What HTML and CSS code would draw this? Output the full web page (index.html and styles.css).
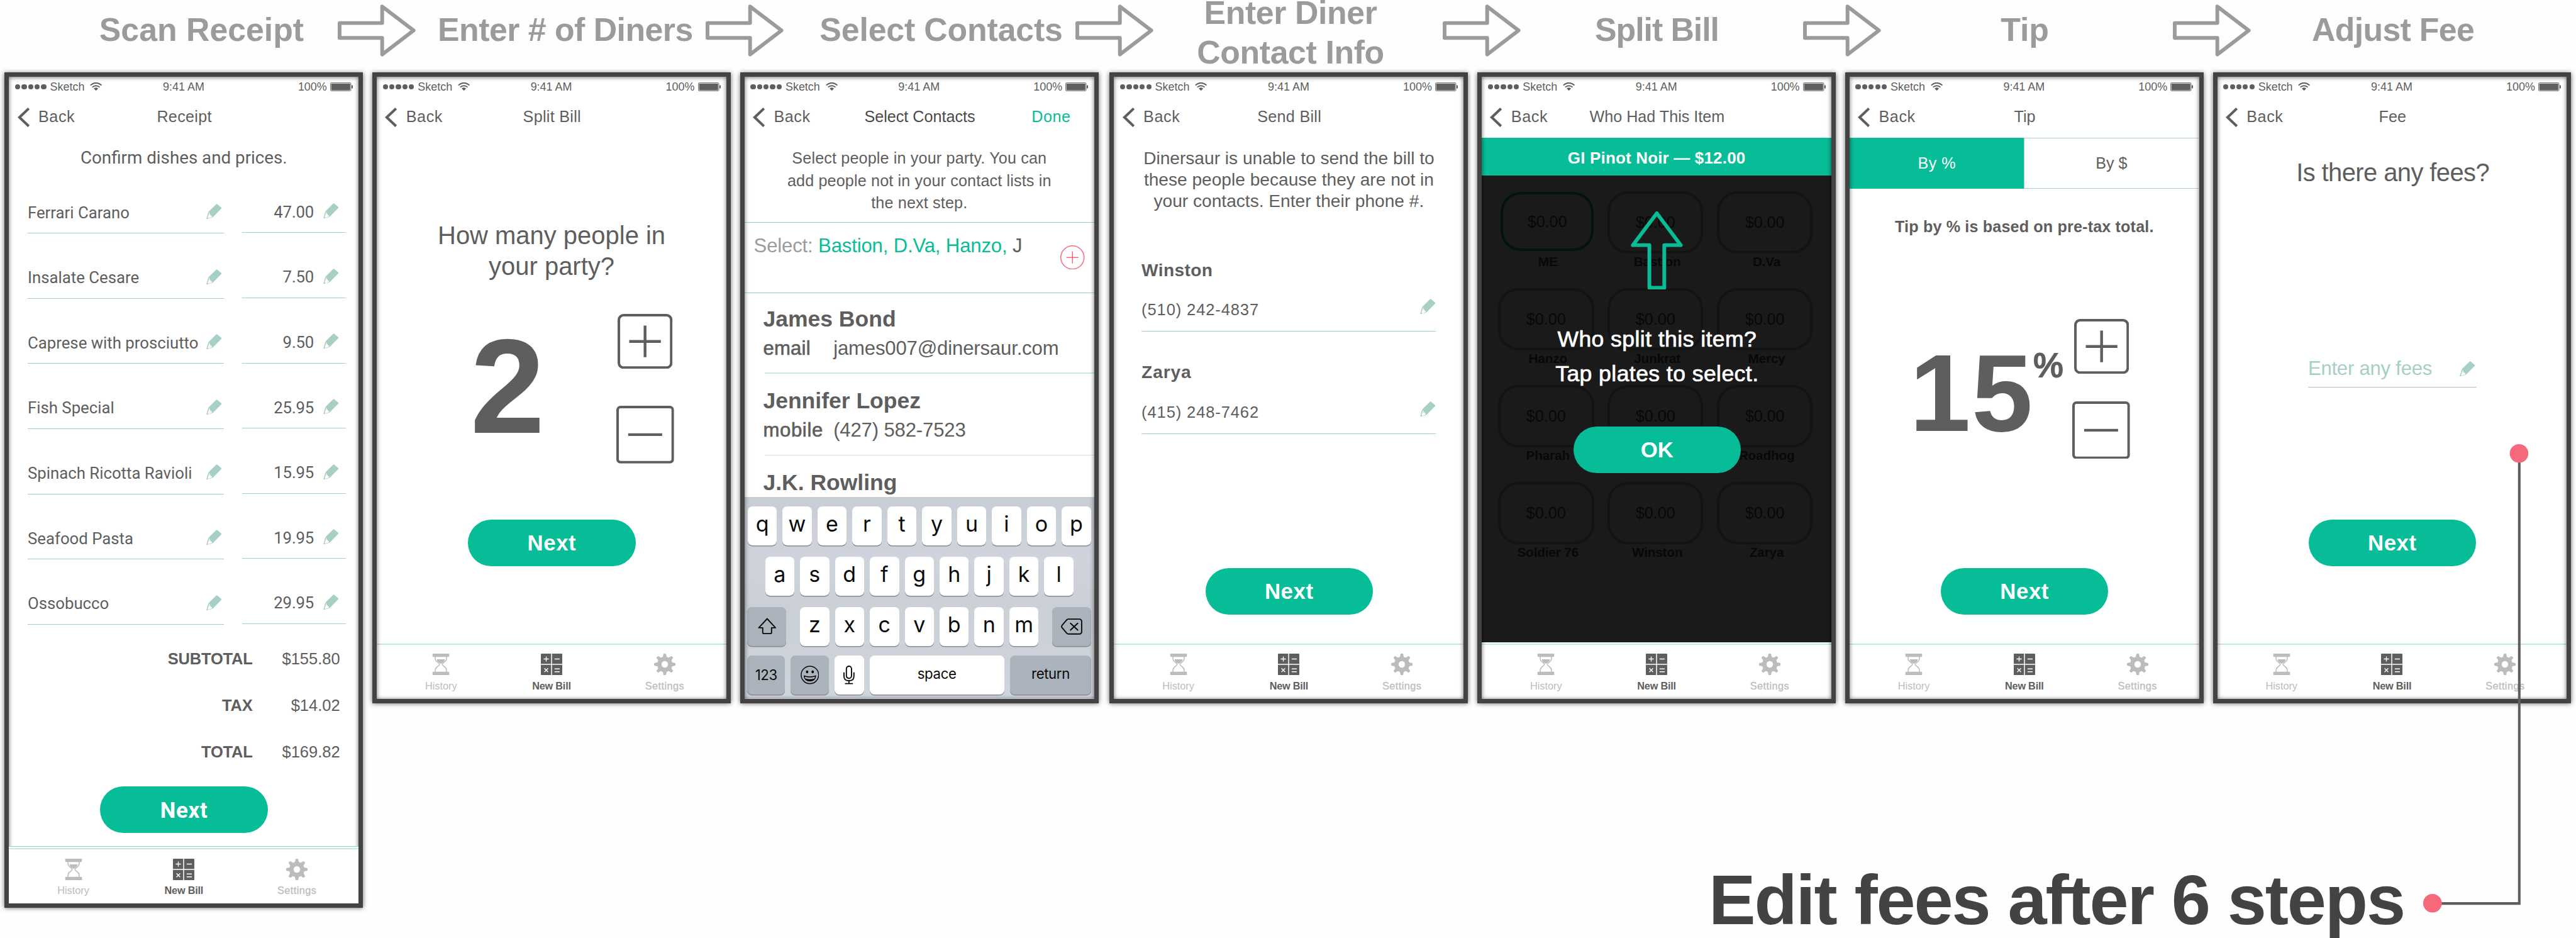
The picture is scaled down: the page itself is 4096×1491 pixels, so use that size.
FILE: index.html
```html
<!DOCTYPE html>
<html lang="en">
<head>
<meta charset="utf-8">
<title>Dinersaur – bill splitting flow</title>
<link rel="stylesheet" href="styles.css">
</head>
<body>
<svg class="sprite" aria-hidden="true">
  <symbol id="step-arrow" viewBox="0 0 168 112">
    <path d="M4 40H95.500V4.500L163 56 95.500 107.500V72H4Z" fill="none" stroke="currentColor" stroke-width="8" stroke-linejoin="round"/>
  </symbol>
  <symbol id="wifi" viewBox="0 0 26 18">
    <path d="M1 6.200Q13-4.200 25 6.200M5 10.300Q13 3.700 21 10.300" fill="none" stroke="currentColor" stroke-width="2.500"/>
    <path d="M8.300 13.100Q13 9.300 17.700 13.100L13 17.800Z" fill="currentColor"/>
  </symbol>
  <symbol id="battery" viewBox="0 0 49 19">
    <rect x=".6" y=".6" width="44" height="17.800" rx="2.500" fill="none" stroke="currentColor" stroke-width="1.200"/>
    <rect x="2.200" y="2.200" width="40.800" height="14.600" rx="1" fill="currentColor"/>
    <path d="M46 6h1.500q1.500 0 1.500 1.500v4q0 1.500-1.500 1.500H46Z" fill="currentColor"/>
  </symbol>
  <symbol id="chevron" viewBox="0 0 26 42">
    <path d="M24 2 4 21 24 40" fill="none" stroke="currentColor" stroke-width="5.500"/>
  </symbol>
  <symbol id="pencil" viewBox="0 0 33 33">
    <path fill-rule="evenodd" fill="currentColor" d="M21.500.8Q22.500-.2 23.500.6L32.300 8Q33.300 9 32.400 10L14.500 28.500 12 29.700 0 33 4.200 19 6 15.800ZM6.800 18.500 3 29.600 4.500 31 11.800 28.600 12.200 25.400 9.300 26.200 10 23 6.800 23.600 7.800 19.500Z"/>
  </symbol>
  <symbol id="hourglass" viewBox="0 0 46 46">
    <path fill="currentColor" d="M5 0H41V5Q41 7 39 7H7Q5 7 5 5ZM5 46H41V41Q41 39 39 39H7Q5 39 5 41ZM14.500 12H31.500C31.500 17 26.500 19.500 23 21.500 19.500 19.500 14.500 17 14.500 12Z"/>
    <path d="M11 6V11C11 18 20 19 20 23S11 28 11 35V40M35 6V11C35 18 26 19 26 23S35 28 35 35V40" fill="none" stroke="currentColor" stroke-width="2"/>
  </symbol>
  <symbol id="calculator" viewBox="0 0 46 46">
    <path fill="currentColor" d="M1.500 0H22V22H0V1.500Q0 0 1.500 0ZM24 0H44.500Q46 0 46 1.500V22H24ZM0 24H22V46H1.500Q0 46 0 44.500ZM24 24H46V44.500Q46 46 44.500 46H24Z"/>
    <path d="M6 11.500H17M11.500 6V17M29.500 11.500H40.500M7.500 31.500 15.500 39.500M15.500 31.500 7.500 39.500M29.500 32.800H40.500M29.500 38.800H40.500" stroke="#fff" stroke-width="1.800"/>
  </symbol>
  <symbol id="gear" viewBox="0 0 46 46">
    <g fill="currentColor">
      <path fill-rule="evenodd" d="M23 6.500a16.500 16.500 0 1 0 0 33 16.500 16.500 0 0 0 0-33ZM23 16a7 7 0 1 1 0 14 7 7 0 0 1 0-14Z"/>
      <path id="tooth" d="M18.500 9 20 1.500Q20.300 0 21.500 0H24.500Q25.700 0 26 1.500L27.500 9Z"/>
      <use href="#tooth" transform="rotate(45 23 23)"/><use href="#tooth" transform="rotate(90 23 23)"/>
      <use href="#tooth" transform="rotate(135 23 23)"/><use href="#tooth" transform="rotate(180 23 23)"/>
      <use href="#tooth" transform="rotate(225 23 23)"/><use href="#tooth" transform="rotate(270 23 23)"/>
      <use href="#tooth" transform="rotate(315 23 23)"/>
    </g>
  </symbol>
  <symbol id="plus-box" viewBox="0 0 118 118">
    <rect x="2.750" y="2.750" width="112.500" height="112.500" rx="10" fill="none" stroke="currentColor" stroke-width="5.500"/>
    <path d="M25 59H93M59 25V93" stroke="currentColor" stroke-width="6"/>
  </symbol>
  <symbol id="minus-box" viewBox="0 0 124 124">
    <rect x="2.750" y="2.750" width="118.500" height="118.500" rx="6" fill="none" stroke="currentColor" stroke-width="5.500"/>
    <path d="M25.500 62H98.500" stroke="currentColor" stroke-width="6"/>
  </symbol>
</svg>

<main class="board">
  <header class="steps">
    <h2 class="step step-1">Scan Receipt</h2>
    <svg class="step-arrow"><use href="#step-arrow"/></svg>
    <h2 class="step step-2">Enter # of Diners</h2>
    <svg class="step-arrow"><use href="#step-arrow"/></svg>
    <h2 class="step step-3">Select Contacts</h2>
    <svg class="step-arrow"><use href="#step-arrow"/></svg>
    <h2 class="step step-4">Enter Diner<br>Contact Info</h2>
    <svg class="step-arrow"><use href="#step-arrow"/></svg>
    <h2 class="step step-5">Split Bill</h2>
    <svg class="step-arrow"><use href="#step-arrow"/></svg>
    <h2 class="step step-6">Tip</h2>
    <svg class="step-arrow"><use href="#step-arrow"/></svg>
    <h2 class="step step-7">Adjust Fee</h2>
  </header>

  <div class="stage">
    <div class="phones">

      <section class="phone phone-tall">
        <div class="status"><span class="signal"><i></i><i></i><i></i><i></i><i></i></span><span class="carrier">Sketch</span><svg class="wifi"><use href="#wifi"/></svg><span class="clock">9:41 AM</span><span class="charge">100%</span><svg class="battery"><use href="#battery"/></svg></div>
        <nav class="nav"><a class="back"><svg class="chevron"><use href="#chevron"/></svg>Back</a><span class="nav-title nav-receipt">Receipt</span></nav>
        <p class="receipt-intro">Confirm dishes and prices.</p>
        <ul class="dishes">
          <li class="dish"><span class="cell cell-name">Ferrari Carano<svg class="pencil"><use href="#pencil"/></svg></span><span class="cell cell-price">47.00<svg class="pencil"><use href="#pencil"/></svg></span></li>
          <li class="dish"><span class="cell cell-name">Insalate Cesare<svg class="pencil"><use href="#pencil"/></svg></span><span class="cell cell-price">7.50<svg class="pencil"><use href="#pencil"/></svg></span></li>
          <li class="dish"><span class="cell cell-name">Caprese with prosciutto<svg class="pencil"><use href="#pencil"/></svg></span><span class="cell cell-price">9.50<svg class="pencil"><use href="#pencil"/></svg></span></li>
          <li class="dish"><span class="cell cell-name">Fish Special<svg class="pencil"><use href="#pencil"/></svg></span><span class="cell cell-price">25.95<svg class="pencil"><use href="#pencil"/></svg></span></li>
          <li class="dish"><span class="cell cell-name">Spinach Ricotta Ravioli<svg class="pencil"><use href="#pencil"/></svg></span><span class="cell cell-price">15.95<svg class="pencil"><use href="#pencil"/></svg></span></li>
          <li class="dish"><span class="cell cell-name">Seafood Pasta<svg class="pencil"><use href="#pencil"/></svg></span><span class="cell cell-price">19.95<svg class="pencil"><use href="#pencil"/></svg></span></li>
          <li class="dish"><span class="cell cell-name">Ossobucco<svg class="pencil"><use href="#pencil"/></svg></span><span class="cell cell-price">29.95<svg class="pencil"><use href="#pencil"/></svg></span></li>
        </ul>
        <dl class="totals">
          <div class="total"><dt>SUBTOTAL</dt><dd>$155.80</dd></div>
          <div class="total"><dt>TAX</dt><dd>$14.02</dd></div>
          <div class="total"><dt>TOTAL</dt><dd>$169.82</dd></div>
        </dl>
        <button class="pill pill-receipt">Next</button>
        <div class="tab-rule"></div>
        <footer class="tabbar tabbar-raised"><div class="tab"><svg class="tab-icon"><use href="#hourglass"/></svg><span>History</span></div><div class="tab tab-active"><svg class="tab-icon"><use href="#calculator"/></svg><span>New Bill</span></div><div class="tab tab-settings"><svg class="tab-icon"><use href="#gear"/></svg><span>Settings</span></div></footer>
      </section>

      <section class="phone">
        <div class="status"><span class="signal"><i></i><i></i><i></i><i></i><i></i></span><span class="carrier">Sketch</span><svg class="wifi"><use href="#wifi"/></svg><span class="clock">9:41 AM</span><span class="charge">100%</span><svg class="battery"><use href="#battery"/></svg></div>
        <nav class="nav"><a class="back"><svg class="chevron"><use href="#chevron"/></svg>Back</a><span class="nav-title nav-receipt">Split Bill</span></nav>
        <p class="question question-party">How many people in<br>your party?</p>
        <div class="stepper stepper-party">
          <span class="count">2</span>
          <div class="stepper-buttons"><svg class="plus-box"><use href="#plus-box"/></svg><svg class="minus-box"><use href="#minus-box"/></svg></div>
        </div>
        <button class="pill pill-party">Next</button>
        <footer class="tabbar"><div class="tab"><svg class="tab-icon"><use href="#hourglass"/></svg><span>History</span></div><div class="tab tab-active"><svg class="tab-icon"><use href="#calculator"/></svg><span>New Bill</span></div><div class="tab tab-settings"><svg class="tab-icon"><use href="#gear"/></svg><span>Settings</span></div></footer>
      </section>

      <section class="phone">
        <div class="status"><span class="signal"><i></i><i></i><i></i><i></i><i></i></span><span class="carrier">Sketch</span><svg class="wifi"><use href="#wifi"/></svg><span class="clock">9:41 AM</span><span class="charge">100%</span><svg class="battery"><use href="#battery"/></svg></div>
        <nav class="nav"><a class="back"><svg class="chevron"><use href="#chevron"/></svg>Back</a><span class="nav-title nav-dark">Select Contacts</span><a class="done">Done</a></nav>
        <p class="contacts-intro">Select people in your party. You can<br>add people not in your contact lists in<br>the next step.</p>
        <div class="picker">
          <p class="picker-text"><span class="picker-label">Select:</span> <span class="picker-names">Bastion, D.Va, Hanzo,</span> J</p>
          <svg class="add" viewBox="0 0 52 52"><circle cx="26" cy="26" r="25"/><path d="M13 26H39M26 13V39"/></svg>
        </div>
        <ul class="contacts">
          <li class="contact"><strong>James Bond</strong><div class="detail"><span class="kind kind-email">email</span><span class="email">james007@dinersaur.com</span></div></li>
          <li class="contact"><strong>Jennifer Lopez</strong><div class="detail"><span class="kind kind-mobile">mobile</span><span>(427) 582-7523</span></div></li>
          <li class="contact"><strong>J.K. Rowling</strong></li>
        </ul>
        <div class="keyboard">
          <div class="keys"><kbd>q</kbd><kbd>w</kbd><kbd>e</kbd><kbd>r</kbd><kbd>t</kbd><kbd>y</kbd><kbd>u</kbd><kbd>i</kbd><kbd>o</kbd><kbd>p</kbd></div>
          <div class="keys"><kbd>a</kbd><kbd>s</kbd><kbd>d</kbd><kbd>f</kbd><kbd>g</kbd><kbd>h</kbd><kbd>j</kbd><kbd>k</kbd><kbd>l</kbd></div>
          <div class="keys keys-edge">
            <kbd class="key-dark key-side"><svg class="key-shift" viewBox="0 0 40 36"><path d="M20 2 38 21.500H29.500V31.500Q29.500 34 27 34H13Q10.500 34 10.500 31.500V21.500H2Z"/></svg></kbd>
            <div class="keys"><kbd>z</kbd><kbd>x</kbd><kbd>c</kbd><kbd>v</kbd><kbd>b</kbd><kbd>n</kbd><kbd>m</kbd></div>
            <kbd class="key-dark key-side"><svg class="key-delete" viewBox="0 0 46 35"><path d="M16 1.500H39Q44.500 1.500 44.500 7V28Q44.500 33.500 39 33.500H16Q14 33.500 12.500 32L2 19.500Q.8 17.500 2 15.500L12.500 3Q14 1.500 16 1.500ZM20.500 10.500 36 25M36 10.500 20.500 25"/></svg></kbd>
          </div>
          <div class="keys keys-last">
            <kbd class="key-dark key-word key-123">123</kbd>
            <kbd class="key-dark key-emoji"><svg class="emoji" viewBox="0 0 40 40"><circle cx="20" cy="20" r="18.800" fill="none" stroke="#0a0a0a" stroke-width="2"/><ellipse cx="14" cy="13.500" rx="2.600" ry="2.900"/><ellipse cx="26" cy="13.500" rx="2.600" ry="2.900"/><path d="M6.500 21Q20 25.500 33.500 21 32.500 34 20 34T6.500 21Z"/><path d="M9 23.800Q20 27 31 23.800 30.600 27 29.500 28 20 31 10.500 28 9.400 27 9 23.800Z" fill="#abb3bd"/></svg></kbd>
            <kbd><svg class="mic" viewBox="0 0 24 40"><rect x="6.500" y="1.300" width="11" height="26" rx="5.500"/><path d="M1.300 15.500V22.500Q1.300 32.500 12 32.500T22.700 22.500V15.500M12 32.500V38.500M4.500 38.700H19.500"/></svg></kbd>
            <kbd class="key-word key-space">space</kbd>
            <kbd class="key-dark key-word key-return">return</kbd>
          </div>
        </div>
      </section>

      <section class="phone phone-spaced">
        <div class="status"><span class="signal"><i></i><i></i><i></i><i></i><i></i></span><span class="carrier">Sketch</span><svg class="wifi"><use href="#wifi"/></svg><span class="clock">9:41 AM</span><span class="charge">100%</span><svg class="battery"><use href="#battery"/></svg></div>
        <nav class="nav"><a class="back"><svg class="chevron"><use href="#chevron"/></svg>Back</a><span class="nav-title nav-receipt">Send Bill</span></nav>
        <p class="unable">Dinersaur is unable to send the bill to<br>these people because they are not in<br>your contacts. Enter their phone #.</p>
        <div class="entries">
          <div class="entry"><strong class="name-winston">Winston</strong><div class="field">(510) 242-4837<svg class="pencil"><use href="#pencil"/></svg></div></div>
          <div class="entry"><strong class="name-zarya">Zarya</strong><div class="field">(415) 248-7462<svg class="pencil"><use href="#pencil"/></svg></div></div>
        </div>
        <button class="pill pill-send">Next</button>
        <footer class="tabbar"><div class="tab"><svg class="tab-icon"><use href="#hourglass"/></svg><span>History</span></div><div class="tab tab-active"><svg class="tab-icon"><use href="#calculator"/></svg><span>New Bill</span></div><div class="tab tab-settings"><svg class="tab-icon"><use href="#gear"/></svg><span>Settings</span></div></footer>
      </section>

      <section class="phone">
        <div class="status"><span class="signal"><i></i><i></i><i></i><i></i><i></i></span><span class="carrier">Sketch</span><svg class="wifi"><use href="#wifi"/></svg><span class="clock">9:41 AM</span><span class="charge">100%</span><svg class="battery"><use href="#battery"/></svg></div>
        <nav class="nav"><a class="back"><svg class="chevron"><use href="#chevron"/></svg>Back</a><span class="nav-title">Who Had This Item</span></nav>
        <div class="item-banner">GI Pinot Noir — $12.00</div>
        <div class="table">
          <div class="plates">
            <div class="plate"><span class="dish-ring dish-me">$0.00</span><b>ME</b></div>
            <div class="plate"><span class="dish-ring">$0.00</span><b>Bastion</b></div>
            <div class="plate"><span class="dish-ring">$0.00</span><b>D.Va</b></div>
            <div class="plate"><span class="dish-ring">$0.00</span><b>Hanzo</b></div>
            <div class="plate"><span class="dish-ring">$0.00</span><b>Junkrat</b></div>
            <div class="plate"><span class="dish-ring">$0.00</span><b>Mercy</b></div>
            <div class="plate"><span class="dish-ring">$0.00</span><b>Pharah</b></div>
            <div class="plate"><span class="dish-ring">$0.00</span></div>
            <div class="plate"><span class="dish-ring">$0.00</span><b>Roadhog</b></div>
            <div class="plate"><span class="dish-ring">$0.00</span><b>Soldier 76</b></div>
            <div class="plate"><span class="dish-ring">$0.00</span><b>Winston</b></div>
            <div class="plate"><span class="dish-ring">$0.00</span><b>Zarya</b></div>
          </div>
          <div class="hint">
            <svg class="hint-arrow" viewBox="0 0 112 168"><path d="M56 4 107.500 72.500H72V164H40V72.500H4.500Z"/></svg>
            <p>Who split this item?<br>Tap plates to select.</p>
            <button class="pill pill-ok">OK</button>
          </div>
        </div>
        <footer class="tabbar"><div class="tab"><svg class="tab-icon"><use href="#hourglass"/></svg><span>History</span></div><div class="tab tab-active"><svg class="tab-icon"><use href="#calculator"/></svg><span>New Bill</span></div><div class="tab tab-settings"><svg class="tab-icon"><use href="#gear"/></svg><span>Settings</span></div></footer>
      </section>

      <section class="phone">
        <div class="status"><span class="signal"><i></i><i></i><i></i><i></i><i></i></span><span class="carrier">Sketch</span><svg class="wifi"><use href="#wifi"/></svg><span class="clock">9:41 AM</span><span class="charge">100%</span><svg class="battery"><use href="#battery"/></svg></div>
        <nav class="nav"><a class="back"><svg class="chevron"><use href="#chevron"/></svg>Back</a><span class="nav-title">Tip</span></nav>
        <div class="segments"><span class="segment segment-on">By %</span><span class="segment">By $</span></div>
        <p class="tip-note">Tip by % is based on pre-tax total.</p>
        <div class="stepper stepper-tip">
          <span class="percent">15</span><span class="percent-sign">%</span>
          <div class="stepper-buttons"><svg class="plus-box"><use href="#plus-box"/></svg><svg class="minus-box"><use href="#minus-box"/></svg></div>
        </div>
        <button class="pill pill-tip">Next</button>
        <footer class="tabbar"><div class="tab"><svg class="tab-icon"><use href="#hourglass"/></svg><span>History</span></div><div class="tab tab-active"><svg class="tab-icon"><use href="#calculator"/></svg><span>New Bill</span></div><div class="tab tab-settings"><svg class="tab-icon"><use href="#gear"/></svg><span>Settings</span></div></footer>
      </section>

      <section class="phone">
        <div class="status"><span class="signal"><i></i><i></i><i></i><i></i><i></i></span><span class="carrier">Sketch</span><svg class="wifi"><use href="#wifi"/></svg><span class="clock">9:41 AM</span><span class="charge">100%</span><svg class="battery"><use href="#battery"/></svg></div>
        <nav class="nav"><a class="back"><svg class="chevron"><use href="#chevron"/></svg>Back</a><span class="nav-title">Fee</span></nav>
        <p class="question question-fee">Is there any fees?</p>
        <div class="fee-field">Enter any fees<svg class="pencil"><use href="#pencil"/></svg></div>
        <button class="pill pill-fee">Next</button>
        <footer class="tabbar"><div class="tab"><svg class="tab-icon"><use href="#hourglass"/></svg><span>History</span></div><div class="tab tab-active"><svg class="tab-icon"><use href="#calculator"/></svg><span>New Bill</span></div><div class="tab tab-settings"><svg class="tab-icon"><use href="#gear"/></svg><span>Settings</span></div></footer>
      </section>
    </div>

    <p class="caption">Edit fees after 6 steps</p>
  </div>

  <svg class="connector" viewBox="0 0 226 1006">
    <path d="M206.500 20V986.500H20" fill="none" stroke="#5e5e5e" stroke-width="5.500"/>
    <circle cx="206" cy="20" r="20" fill="#f6697c"/>
    <circle cx="20" cy="986" r="20" fill="#f6697c"/>
  </svg>
</main>
</body>
</html>
```
FILE: styles.css
```css
/* One hundredth of a rem is one artboard pixel. */
html {
  font-size: 74.0152px;
}

* {
  box-sizing: border-box;
  margin: 0;
  padding: 0;
}

body {
  background: #fefefe;
  color: #5e5e5e;
  font-family: "Liberation Sans", Arial, sans-serif;
  overflow: hidden;
}

ul { list-style: none; }
svg { display: block; flex: none; }
p, span, strong, b, dt, dd, button, kbd { white-space: nowrap; }

.sprite { position: absolute; width: 0; height: 0; }

.board {
  position: relative;
  width: 55.34rem;
  height: 20.14rem;
  overflow: hidden;
}

/* ---- step titles ---- */
.steps {
  display: flex;
  height: 1.56rem;
  color: #9b9b9b;
}

.step {
  flex: none;
  padding-top: .21rem;
  font-size: .7rem;
  font-weight: 700;
  line-height: .855rem;
  text-align: center;
  white-space: nowrap;
}

.step-1 { width: 7.26rem; padding-left: 1.4rem; }
.step-2 { width: 6.22rem; padding-left: .19rem; letter-spacing: -.007rem; }
.step-3 { width: 6.26rem; padding-left: .5rem; letter-spacing: -.002rem; }
.step-4 { width: 6.22rem; padding-right: .33rem; margin-top: -.36rem; letter-spacing: -.005rem; }
.step-5 { width: 6.06rem; padding-right: .23rem; letter-spacing: -.014rem; }
.step-6 { width: 6.26rem; padding-right: .1rem; }
.step-7 { width: 6.98rem; padding-right: .88rem; letter-spacing: -.009rem; }

.step-arrow { width: 1.68rem; height: 1.12rem; margin-top: .1rem; }

/* ---- phones ---- */
.stage { display: grid; height: 18.58rem; }
.stage > * { grid-area: 1 / 1; }

.phones {
  display: flex;
  align-items: flex-start;
  gap: .2rem;
  padding-left: .1rem;
}

.phone {
  position: relative;
  display: flex;
  flex: none;
  flex-direction: column;
  width: 7.7rem;
  height: 13.54rem;
  border: .1rem solid #434343;
  background: #fff;
  box-shadow: 0 .02rem .1rem rgba(0, 0, 0, .6);
}

.phone::after {
  content: "";
  position: absolute;
  inset: 0;
  box-shadow: inset 0 .01rem .1rem rgba(0, 0, 0, .6);
  pointer-events: none;
}

.phone-tall { height: 17.94rem; }
.phone-spaced { margin-left: .04rem; }

/* ---- status bar ---- */
.status {
  display: grid;
  grid-template-columns: .75rem .86rem 1.43rem 1.16rem 2.5rem .56rem;
  align-items: center;
  height: .41rem;
  padding-left: .13rem;
  font-size: .243rem;
  line-height: .3rem;
}

.signal { display: flex; gap: .03rem; }
.signal i { width: .11rem; height: .11rem; border-radius: 50%; background: currentColor; }
.wifi { width: .26rem; height: .18rem; }
.clock { text-align: center; }
.charge { text-align: right; }
.battery { width: .49rem; height: .19rem; margin-left: .07rem; }

/* ---- navigation bar ---- */
.nav {
  display: grid;
  grid-template-columns: 1fr auto 1fr;
  align-items: center;
  height: .89rem;
  padding: .01rem .5rem 0 .18rem;
  font-size: .34rem;
  line-height: .4rem;
}

.back { display: flex; align-items: center; gap: .19rem; letter-spacing: .008rem; }
.chevron { width: .26rem; height: .42rem; }
.nav-title { margin-left: .34rem; }
.nav-receipt { letter-spacing: .004rem; }
.nav-dark { color: #4a4a4a; }
.done { justify-self: end; color: #07bd98; letter-spacing: .008rem; margin-top: -.02rem; }

/* ---- shared controls ---- */
.pencil { width: .33rem; height: .33rem; color: #a6cfc6; }

.pill {
  flex: none;
  width: 3.6rem;
  height: 1rem;
  margin-left: 1.96rem;
  padding-top: .03rem;
  border: 0;
  border-radius: .5rem;
  background: #07bd98;
  color: #fff;
  font: 700 .47rem/.97rem "Liberation Sans", Arial, sans-serif;
  letter-spacing: .008rem;
  text-align: center;
}

.pill-receipt { margin-top: .25rem; font-family: Roboto, sans-serif; letter-spacing: .01rem; }
.pill-party { margin-top: 1.2rem; }
.pill-send { margin-top: 2.87rem; }
.pill-tip { margin-top: 2.34rem; }
.pill-fee { margin-top: 2.83rem; }
.pill-ok { margin: .78rem 0 0; letter-spacing: 0; }

.question {
  font-size: .54rem;
  line-height: .66rem;
  text-align: center;
}

.question-party { margin-top: 1.77rem; }
.question-fee { margin-top: .42rem; letter-spacing: -.008rem; padding-left: .03rem; }

/* ---- tab bar ---- */
.tabbar {
  display: grid;
  grid-template-columns: 2.76rem 1.99rem 2.75rem;
  flex: none;
  height: 1.19rem;
  margin-top: auto;
  padding-top: .2rem;
  border-top: .028rem solid #c0ece4;
  background: #fff;
  color: #bcbcbc;
  font-size: .22rem;
  line-height: .26rem;
}

.tabbar-raised { position: relative; z-index: 1; margin-top: 0; }

.tab-rule {
  position: relative;
  z-index: 1;
  flex: none;
  height: .04rem;
  margin-top: auto;
  border-top: .02rem solid #86d8ce;
  background: #fff;
}

.tab { display: flex; flex-direction: column; align-items: center; gap: .1rem; }
.tab-icon { width: .46rem; height: .46rem; }
.tab-active { color: #5e5e5e; font-weight: 700; letter-spacing: -.003rem; }
.tab-settings { padding-left: .12rem; letter-spacing: .006rem; -webkit-text-stroke: .004rem; }

/* ---- receipt ---- */
.receipt-intro {
  height: .66rem;
  padding-top: .22rem;
  font: .375rem/.44rem Roboto, sans-serif;
  text-align: center;
}

.dishes { font: .348rem/.42rem Roboto, sans-serif; }

.dish {
  display: flex;
  align-items: flex-end;
  gap: .39rem;
  height: 1.4rem;
  padding-left: .4rem;
}

.cell {
  display: flex;
  align-items: center;
  height: .66rem;
  padding-bottom: .22rem;
  border-bottom: .02rem solid #a6cfc6;
}

.cell .pencil { margin-bottom: .05rem; }
.cell-name { justify-content: space-between; width: 4.22rem; padding-right: .055rem; }
.cell-price { justify-content: flex-end; gap: .2rem; width: 2.22rem; margin-bottom: .01rem; padding-right: .15rem; letter-spacing: -.002rem; }

.totals { margin-top: .23rem; padding-right: .4rem; font-size: .345rem; }
.total { display: flex; justify-content: flex-end; height: 1rem; line-height: 1rem; }
.total dt { font-weight: 700; letter-spacing: -.003rem; }
.total dd { width: 1.88rem; text-align: right; }

/* ---- steppers ---- */
.stepper { display: flex; align-items: flex-start; }
.stepper-buttons { display: flex; flex-direction: column; align-items: center; width: 1.24rem; }
.plus-box { width: 1.18rem; height: 1.18rem; }
.minus-box { width: 1.24rem; height: 1.24rem; }

.stepper-party { height: 3.21rem; margin-top: .7rem; padding-left: 2.01rem; }
.stepper-party .stepper-buttons { gap: .79rem; margin-left: 1.54rem; }
.count { width: 1.6rem; font-size: 2.88rem; font-weight: 700; line-height: 3.12rem; }

.stepper-tip { height: 3.01rem; margin-top: 1.77rem; padding-left: 1.29rem; font-weight: 700; }
.stepper-tip .stepper-buttons { gap: .59rem; }
.percent { width: 2.66rem; font-size: 2.36rem; line-height: 3.18rem; letter-spacing: .02rem; }
.percent-sign { width: .84rem; font-size: .72rem; font-weight: 400; line-height: 2.01rem; -webkit-text-stroke: .03rem; }

/* ---- contact picker ---- */
.contacts-intro {
  height: 1.82rem;
  padding-top: .21rem;
  font-size: .34rem;
  line-height: .48rem;
  letter-spacing: .002rem;
  text-align: center;
}

.picker {
  display: flex;
  align-items: flex-start;
  justify-content: space-between;
  height: 1.52rem;
  padding: .245rem .2rem 0 .2rem;
  border: solid #9fcfc5;
  border-width: .02rem 0;
  font-size: .42rem;
  line-height: .5rem;
  letter-spacing: -.002rem;
}

.picker-label { color: #9b9b9b; }
.picker-names { color: #07bd98; }

.add {
  width: .52rem;
  height: .52rem;
  margin-top: .23rem;
  fill: none;
  stroke: #f6697c;
  stroke-width: 2;
}

.contacts { flex: none; height: 4.38rem; overflow: hidden; }

.contact {
  display: flex;
  flex-direction: column;
  height: 1.76rem;
  padding: .31rem 0 0 .4rem;
}

.contact:first-child { height: 1.73rem; padding-top: .28rem; }

.contact::after {
  content: "";
  height: .02rem;
  margin: auto 0 0 .03rem;
  background: #cbe8e2;
}

.contact strong { font-size: .48rem; line-height: .56rem; }
.detail { display: flex; margin-top: .11rem; font-size: .42rem; line-height: .48rem; letter-spacing: -.002rem; }
.kind { width: 1.51rem; -webkit-text-stroke: .009rem; }
.kind-email { letter-spacing: .003rem; }
.kind-mobile { letter-spacing: .009rem; }
.email { letter-spacing: -.002rem; }

/* ---- keyboard ---- */
.keyboard {
  display: flex;
  flex: none;
  flex-direction: column;
  gap: .24rem;
  height: 4.32rem;
  padding: .2rem .06rem 0;
  background: linear-gradient(#c9ced6, #cfd4dc 30%, #cbd0d7 55%, #d0d5dd);
  color: #0a0a0a;
}

.keys { display: flex; justify-content: center; gap: .122rem; }
.keys-edge { justify-content: space-between; }
.keys-last { margin-top: -.04rem; justify-content: space-between; gap: 0; }

.keyboard kbd {
  display: flex;
  flex: none;
  align-items: center;
  justify-content: center;
  width: .628rem;
  height: .84rem;
  padding-bottom: .07rem;
  border-radius: .1rem;
  background: #fff;
  box-shadow: 0 .02rem 0 #898d92;
  font: .46rem/.7rem Inter, sans-serif;
}

.keyboard .key-dark { background: #abb3bd; padding-bottom: 0; }
.keyboard .key-side { width: .84rem; }
.keyboard .key-word { padding-bottom: .04rem; font-size: .3rem; letter-spacing: -.005rem; }
.keyboard .key-123 { width: .81rem; padding-bottom: 0; }
.keyboard .key-emoji { width: .82rem; }
.keyboard .key-space { width: 2.89rem; }
.keyboard .key-return { width: 1.75rem; }

.key-shift, .key-delete, .mic { fill: none; stroke: #0a0a0a; stroke-width: 2.6; stroke-linejoin: round; stroke-linecap: round; }
.key-shift { width: .4rem; height: .36rem; }
.key-delete { width: .46rem; height: .35rem; }
.emoji { width: .4rem; height: .4rem; }
.mic { width: .24rem; height: .4rem; margin-top: .08rem; }

/* ---- missing phone numbers ---- */
.unable {
  margin-top: .22rem;
  font-size: .38rem;
  line-height: .46rem;
  text-align: center;
}

.entries {
  display: flex;
  flex-direction: column;
  gap: .65rem;
  width: 6.32rem;
  margin: 1.02rem 0 0 .59rem;
}

.entry strong { display: block; font-size: .38rem; line-height: .46rem; }
.name-winston { letter-spacing: .005rem; }
.name-zarya { letter-spacing: .012rem; }

.field {
  display: flex;
  align-items: center;
  justify-content: space-between;
  height: .8rem;
  margin-top: .29rem;
  padding-bottom: .115rem;
  border-bottom: .02rem solid #a6cfc6;
  font-size: .345rem;
  letter-spacing: .012rem;
}

.field .pencil { margin-bottom: .16rem; }

/* ---- plates ---- */
.item-banner {
  height: .82rem;
  padding-top: .03rem;
  background: #07bd98;
  color: #fff;
  font-size: .35rem;
  font-weight: 700;
  line-height: .82rem;
  letter-spacing: .003rem;
  text-align: center;
}

.table {
  position: relative;
  height: 10.02rem;
  background: #1a1a1a;
  color: #080808;
}

.plates {
  display: grid;
  grid-template-columns: 2.06rem 2.06rem 2.06rem;
  grid-auto-rows: 2.08rem;
  column-gap: .29rem;
  padding: .33rem 0 0 .35rem;
}

.plate { display: flex; flex-direction: column; align-items: center; }

.dish-ring {
  width: 2.06rem;
  height: 1.34rem;
  border: .06rem solid #121413;
  border-radius: .44rem;
  font-size: .34rem;
  line-height: 1.22rem;
  text-align: center;
}

.dish-me {
  width: 2rem;
  height: 1.28rem;
  margin: .01rem 0 .05rem .05rem;
  border-color: #02130e;
  line-height: 1.18rem;
}

.plate b { padding-left: .08rem; font-size: .28rem; line-height: .36rem; letter-spacing: -.002rem; }

.hint {
  position: absolute;
  inset: 0;
  display: flex;
  flex-direction: column;
  align-items: center;
  padding: .76rem 0 0 .02rem;
  color: #fff;
  font-size: .48rem;
  line-height: .73rem;
  letter-spacing: .006rem;
  text-align: center;
}

.hint p { margin-top: .71rem; -webkit-text-stroke: .01rem; }
.hint-arrow { width: 1.12rem; height: 1.68rem; fill: none; stroke: #07bd98; stroke-width: 8; stroke-linejoin: round; }

/* ---- tip ---- */
.segments { display: grid; grid-template-columns: 3.74rem 3.76rem; height: 1.1rem; font-size: .34rem; text-align: center; }
.segment { padding-top: .01rem; border: .02rem solid #a6cfc6; border-right: 0; line-height: 1.06rem; }
.segment-on { border-color: #07bd98; background: #07bd98; color: #fff; letter-spacing: .006rem; }
.tip-note { margin-top: .62rem; font-size: .34rem; font-weight: 700; line-height: .4rem; letter-spacing: .002rem; text-align: center; }

/* ---- fee ---- */
.fee-field {
  display: flex;
  align-items: center;
  justify-content: space-between;
  width: 3.62rem;
  height: .8rem;
  margin: 3.49rem 0 0 1.95rem;
  padding-right: .03rem;
  border-bottom: .02rem solid #b4bdce;
  color: #a6cfc6;
  font-size: .42rem;
  letter-spacing: -.003rem;
}

/* ---- callout ---- */
.caption {
  align-self: end;
  justify-self: start;
  margin-left: 36.71rem;
  color: #434343;
  font-size: 1.51rem;
  font-weight: 700;
  line-height: 1.6rem;
  letter-spacing: -.029rem;
}

.connector {
  position: absolute;
  left: 52.06rem;
  top: 9.54rem;
  width: 2.26rem;
  height: 10.06rem;
}
```
